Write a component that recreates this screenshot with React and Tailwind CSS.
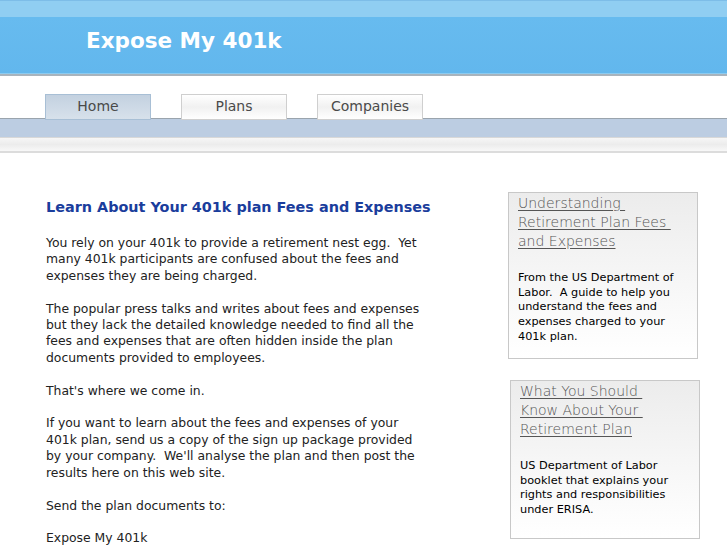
import React from 'react';

const tabs = [
  { label: 'Home', active: true },
  { label: 'Plans' },
  { label: 'Companies' },
];

const boxes = [
  {
    title: ['Understanding ', 'Retirement Plan Fees ', 'and Expenses'],
    text: 'From the US Department of Labor.\u00a0 A guide to help you understand the fees and expenses charged to your 401k plan.',
    cls: 'h-[167px]',
  },
  {
    title: ['What You Should ', 'Know About Your ', 'Retirement Plan'],
    text: 'US Department of Labor booklet that explains your rights and responsibilities under ERISA.',
    cls: 'h-[159px] ml-[2px]',
  },
];

const App = () => {
  return (
    <div className="w-[727px] h-[545px] overflow-hidden bg-white font-['DejaVu_Sans',sans-serif]">
      {/* header */}
      <div className="border-t border-[#7dbde8] h-[17px] bg-[#90cef2]" />
      <div className="h-[57px] bg-gradient-to-b from-[#67bbef] to-[#62b7ed] border-b border-[#8ccbf0] flex items-center pl-[86px]">
        <h1 className="text-white font-bold text-[21.5px] leading-none pb-[8px]">Expose My 401k</h1>
      </div>
      <div className="h-[2px] bg-[#a8b4bd]" />

      {/* nav */}
      <div className="h-[43px] flex items-end gap-[30px] pl-[45px] border-b border-[#9aa4ad] relative">
        {tabs.map((t) => (
          <div
            key={t.label}
            className={
              'w-[106px] h-[26px] -mb-[2px] pb-[2px] flex items-center justify-center text-[14px] text-[#4a4a4a] border z-10 ' +
              (t.active
                ? 'bg-gradient-to-b from-[#c3d1e0] to-[#d7e1eb] border-[#a8bfd5]'
                : 'bg-gradient-to-b from-white via-[#f1f1f1] to-white border-[#cfcfcf]')
            }
          >
            {t.label}
          </div>
        ))}
      </div>
      <div className="h-[18px] bg-[#bccde2]" />
      <div className="h-[14px] border-t border-[#d8d8d8] bg-gradient-to-b from-[#f6f6f6] via-[#ececec] to-[#f8f8f8]" />
      <div className="h-[2px] bg-[#dcdcdc]" />

      {/* content */}
      <div className="flex pl-[46px] pt-[39px]">
        <div className="w-[400px] pt-[6px] text-[12.4px] leading-[16.4px] text-[#222]">
          <h2 className="text-[14.4px] font-bold text-[#1a3d9c] leading-[18px] mb-[19px] whitespace-nowrap">
            Learn About Your 401k plan Fees and Expenses
          </h2>
          <p className="w-[385px]">
            You rely on your 401k to provide a retirement nest egg.&nbsp; Yet many 401k participants are confused about the fees and expenses they are being charged.
            <br /><br />
            The popular press talks and writes about fees and expenses but they lack the detailed knowledge needed to find all the fees and expenses that are often hidden inside the plan documents provided to employees.
            <br /><br />
            That's where we come in.
            <br /><br />
            If you want to learn about the fees and expenses of your 401k plan, send us a copy of the sign up package provided by your company.&nbsp; We'll analyse the plan and then post the results here on this web site.
            <br /><br />
            Send the plan documents to:
            <br /><br />
            Expose My 401k
          </p>
        </div>

        <div className="ml-[62px] flex flex-col gap-[21px]">
          {boxes.map((b, i) => (
            <div
              key={i}
              className={'w-[190px] border border-[#c8c8c8] bg-gradient-to-b from-[#ececec] via-[#f6f6f6] to-white px-[9px] ' + b.cls}
            >
              <div className="font-['DejaVu_Sans_ExtraLight','DejaVu_Sans',sans-serif] font-extralight text-[14px] leading-[19px] text-[#555] mt-[1px]">
                {b.title.map((l, j) => (
                  <div key={j}>
                    <a href="#" className="underline underline-offset-2 whitespace-pre">{l}</a>
                  </div>
                ))}
              </div>
              <p className="mt-[20px] text-[11.3px] leading-[14.7px] text-black">{b.text}</p>
            </div>
          ))}
        </div>
      </div>
    </div>
  );
};

export default App;
